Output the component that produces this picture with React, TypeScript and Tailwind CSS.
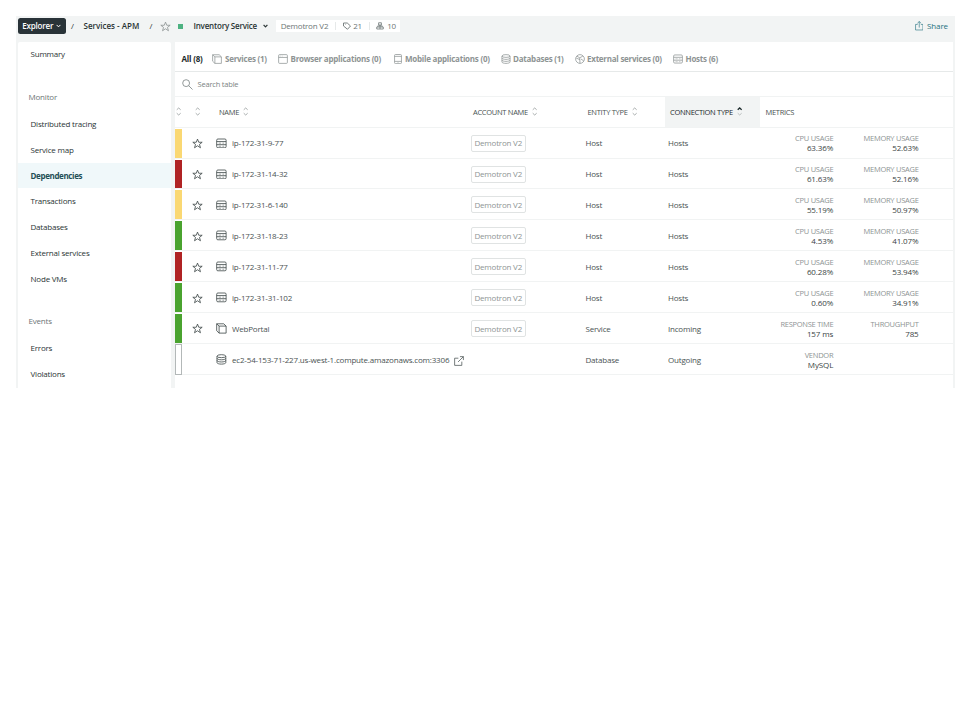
import React from "react";

type IconProps = { className?: string };
const stroke = { fill: "none", stroke: "currentColor", strokeWidth: 1.2, strokeLinejoin: "round" as const };

const Star = ({ className = "" }: IconProps) => (
  <svg viewBox="0 0 16 16" className={className} {...stroke}>
    <path strokeLinejoin="miter" strokeWidth="1.2" d="M8 1.6 9.8 6.2H14.8L10.9 9.3 12.3 14.2 8 11.3 3.7 14.2 5.1 9.3 1.2 6.2H6.2Z" />
  </svg>
);
const HostIcon = ({ className = "" }: IconProps) => (
  <svg viewBox="0 0 16 16" className={className} {...stroke}>
    <rect x="1" y="1.5" width="14" height="13" rx="1.8" />
    <path d="M1 5.3H15M1 9.9H15" />
    <path strokeOpacity=".6" d="M4 7.6H7.5M9.5 7.6H12M4 12.2H7.5M9.5 12.2H12" />
  </svg>
);
const ServiceIcon = ({ className = "" }: IconProps) => (
  <svg viewBox="0 0 16 16" className={className} {...stroke}>
    <path d="M4.6 4.6H15V15H4.6ZM4.6 4.6 1 1.2H11.5L15 4.6M1 1.2V11.5L4.6 15" />
  </svg>
);
const DbIcon = ({ className = "" }: IconProps) => (
  <svg viewBox="0 0 16 16" className={className} {...stroke}>
    <ellipse cx="8" cy="3.2" rx="6.5" ry="2.2" />
    <path d="M1.5 3.2V12.8C1.5 14 4.4 15 8 15S14.5 14 14.5 12.8V3.2M1.5 6.4C1.5 7.6 4.4 8.6 8 8.6S14.5 7.6 14.5 6.4M1.5 9.6C1.5 10.8 4.4 11.8 8 11.8S14.5 10.8 14.5 9.6" />
  </svg>
);
const BrowserIcon = ({ className = "" }: IconProps) => (
  <svg viewBox="0 0 16 16" className={className} {...stroke}>
    <rect x="1" y="1" width="14" height="14" rx="1.5" />
    <path d="M1 5.5H15" />
    <path strokeOpacity=".5" d="M3 3.3H4.5M6 3.3H7.5" />
  </svg>
);
const MobileIcon = ({ className = "" }: IconProps) => (
  <svg viewBox="0 0 16 16" className={className} {...stroke}>
    <rect x="2.5" y=".8" width="11" height="14.6" rx="1.5" />
    <path d="M2.5 3.8H13.5M2.5 11.8H13.5" />
    <path strokeOpacity=".5" d="M7 13.6H9" />
  </svg>
);
const GlobeIcon = ({ className = "" }: IconProps) => (
  <svg viewBox="0 0 16 16" className={className} {...stroke}>
    <circle cx="8" cy="8" r="7" />
    <path d="M3 3.5 7.5 6 8 15M7.5 6 12.5 3.5M2 6.5 7.8 9M9.5 8 14 11" />
  </svg>
);
const External = ({ className = "" }: IconProps) => (
  <svg viewBox="0 0 16 16" className={className} {...stroke}>
    <path d="M7 3.5H1V15H12.5V9M9.5 1H15V6.5M15 1 6.5 9.5" />
  </svg>
);
const Sort = ({ active = false }: { active?: boolean }) => (
  <svg viewBox="0 0 6 10" className="h-[9px] w-[5.4px] shrink-0" fill="none" strokeWidth={active ? 1.5 : 1}>
    <path d="M.8 3.1 3 1.1 5.2 3.1" stroke={active ? "#1d2b2c" : "#9ea4a4"} />
    <path d="M.8 6.9 3 8.9 5.2 6.9" strokeWidth="1" stroke={active ? "#b5baba" : "#9ea4a4"} />
  </svg>
);

const NavItem = ({ label, active = false }: { label: string; active?: boolean }) => (
  <div
    className={
      active
        ? "flex h-[25.8px] items-center bg-[#f0f8fa] pt-[0.6px] pl-[12.5px] font-bold tracking-[-0.36px] text-[#1f4f56]"
        : "flex h-[25.8px] items-center pl-[12.5px] text-[#2a3434]"
    }
  >
    {label}
  </div>
);
const NavHeading = ({ label }: { label: string }) => (
  <div className="flex h-[43.8px] items-center pt-[15px] pl-[10.5px] text-[#6d7676]">{label}</div>
);

const tabs = [
  { Icon: ServiceIcon, label: "Services (1)", width: "w-[65.5px]", gap: "gap-[3px]" },
  { Icon: BrowserIcon, label: "Browser applications (0)", width: "w-[115px]", gap: "gap-[3px]" },
  { Icon: MobileIcon, label: "Mobile applications (0)", width: "w-[108px]", gap: "gap-[2.5px]" },
  { Icon: DbIcon, label: "Databases (1)", width: "w-[74px]", gap: "gap-[2.5px]" },
  { Icon: GlobeIcon, label: "External services (0)", width: "w-[98.5px]", gap: "gap-[2.5px]" },
  { Icon: HostIcon, label: "Hosts (6)", width: "w-[60px]", gap: "gap-[2.5px]" },
];

type Row = { bar: string; name: string; kind: string; conn: string; m: string[][] };
const yellow = "bg-[#fad873]";
const red = "bg-[#b02324]";
const green = "bg-[#4aa32f]";
const usage = (c: string, m: string) => [["CPU USAGE", c], ["MEMORY USAGE", m]];
const rows: Row[] = [
  { bar: yellow, name: "ip-172-31-9-77", kind: "Host", conn: "Hosts", m: usage("63.36%", "52.63%") },
  { bar: red, name: "ip-172-31-14-32", kind: "Host", conn: "Hosts", m: usage("61.63%", "52.16%") },
  { bar: yellow, name: "ip-172-31-6-140", kind: "Host", conn: "Hosts", m: usage("55.19%", "50.97%") },
  { bar: green, name: "ip-172-31-18-23", kind: "Host", conn: "Hosts", m: usage("4.53%", "41.07%") },
  { bar: red, name: "ip-172-31-11-77", kind: "Host", conn: "Hosts", m: usage("60.28%", "53.94%") },
  { bar: green, name: "ip-172-31-31-102", kind: "Host", conn: "Hosts", m: usage("0.60%", "34.91%") },
  { bar: green, name: "WebPortal", kind: "Service", conn: "Incoming", m: [["RESPONSE TIME", "157 ms"], ["THROUGHPUT", "785"]] },
  {
    bar: "border border-[#b3b8b8] bg-white",
    name: "ec2-54-153-71-227.us-west-1.compute.amazonaws.com:3306",
    kind: "Database",
    conn: "Outgoing",
    m: [["VENDOR", "MySQL"]],
  },
];
const kindIcons: Record<string, (p: IconProps) => React.ReactNode> = { Host: HostIcon, Service: ServiceIcon, Database: DbIcon };

const TableRow = ({ row }: { row: Row }) => {
  const Icon = kindIcons[row.kind];
  const isDb = row.kind === "Database";
  return (
    <div className="flex h-[30.95px] items-center border-b border-[#f1f3f3] text-[#4a5353]">
      <div className={"w-[7px] shrink-0 self-stretch " + (isDb ? "-mb-px " : "mt-px ") + row.bar} />
      <div className="flex w-[34.5px] justify-center pt-[1.5px]">
        {!isDb && <Star className="mr-[3.5px] h-[11px] w-[11px] text-[#3f4949]" />}
      </div>
      <div className="flex w-[254.5px] items-center pt-[1px]">
        <Icon className="-ml-[0.3px] h-[10.8px] w-[10.8px] shrink-0 text-[#3f4949]" />
        <span className="ml-[5px] tracking-[-0.18px]">{row.name}</span>
        {isDb && <External className="mt-[2px] ml-[4.5px] h-[10px] w-[10px] shrink-0" />}
      </div>
      <div className="w-[114.5px] pt-[1px]">
        {!isDb && (
          <span className="flex h-[17px] w-[54.5px] items-center justify-center rounded-[2px] border border-[#e0e3e3] text-[#8e9494]">
            Demotron V2
          </span>
        )}
      </div>
      <div className="w-[82.5px] pt-[1px]">{row.kind}</div>
      <div className="w-[80px] pt-[1px]">{row.conn}</div>
      {row.m.map(([label, value]) => (
        <div key={label} className="w-[85.3px] pt-[1px] text-right leading-[9px]">
          <div className="text-[7.5px] tracking-[-0.26px] text-[#8e9494]">{label}</div>
          <div className="tracking-[-0.1px] text-[#3a4444]">{value}</div>
        </div>
      ))}
    </div>
  );
};

export default function App() {
  return (
    <div className="h-[720px] w-[960px] overflow-hidden bg-white pt-4 pl-4 font-['Open_Sans',sans-serif] text-[8px] leading-[10px] tracking-[-0.2px] whitespace-nowrap">
      <div className="flex h-[372px] w-[939px] flex-col bg-[#f2f4f4]">
        <header className="flex h-[26px] shrink-0 items-center pb-[6px] pl-[2px] text-[#2a3434]">
          <div className="flex h-[15.5px] w-[47.5px] items-center justify-center gap-[3px] rounded-[2.5px] bg-[#293338] font-semibold text-white">
            Explorer
            <svg viewBox="0 0 6 4" className="h-[4px] w-[5px]" {...stroke}><path d="M.7.7 3 3 5.3.7" /></svg>
          </div>
          <span className="w-[18px] pl-[5.5px]">/</span>
          <span className="w-[66px] font-semibold tracking-normal">Services - APM</span>
          <span className="w-[10.5px]">/</span>
          <Star className="h-[11px] w-[11px] text-[#8e9494]" />
          <span className="ml-[7px] h-[5px] w-[5px] bg-[#4db281]" />
          <span className="ml-[10.5px] w-[69px] font-semibold">Inventory Service</span>
          <svg viewBox="0 0 6 4" className="h-[4px] w-[5px]" {...stroke} strokeWidth={1.5}><path d="M.7.7 3 3 5.3.7" /></svg>
          <div className="ml-[8.2px] flex h-[12px] w-[124px] items-center bg-white pl-[5px] text-[#6d7676]">
            <span className="w-[54.5px]">Demotron V2</span>
            <span className="h-[8px] w-px bg-[#e6e9e9]" />
            <svg viewBox="0 0 16 16" className="ml-[6.5px] h-[8px] w-[8px]" {...stroke} strokeWidth={1.8}>
              <path d="M1 2H8.5L15 8 9 14.5 1 8ZM4.2 5H5" />
            </svg>
            <span className="ml-[2.5px] w-[15.5px]">21</span>
            <span className="h-[8px] w-px bg-[#e6e9e9]" />
            <svg viewBox="0 0 16 16" className="ml-[6.5px] h-[8px] w-[8px]" {...stroke} strokeWidth={1.6}>
              <path d="M5.2 1.5H10.8V6H5.2ZM3.5 9.5V7.8H12.5V9.5M8 6V14M1.5 10H14.5V14H1.5Z" />
            </svg>
            <span className="ml-[3px]">10</span>
          </div>
          <div className="mr-[7px] ml-auto flex items-center gap-[3.5px] tracking-[-0.1px] text-[#257281]">
            <svg viewBox="0 0 16 18" className="h-[9.5px] w-[8.5px]" {...stroke}>
              <path d="M5 6.5H1V17H15V6.5H11M8 12.5V1M4.5 4.3 8 1 11.5 4.3" />
            </svg>
            Share
          </div>
        </header>
        <div className="flex min-h-0 flex-1 pl-[2px]">
          <nav className="w-[152.5px] shrink-0 overflow-hidden rounded-t-[2px] bg-white">
            <div className="-mt-[0.6px]">
              <NavItem label="Summary" />
              <NavHeading label="Monitor" />
              {["Distributed tracing", "Service map", "Dependencies", "Transactions", "Databases", "External services", "Node VMs"].map((l) => (
                <NavItem key={l} label={l} active={l === "Dependencies"} />
              ))}
              <NavHeading label="Events" />
              <NavItem label="Errors" />
              <NavItem label="Violations" />
            </div>
          </nav>
          <main className="ml-[4.5px] w-[778px] shrink-0 bg-white">
            <div className="flex h-[30px] items-center border-b border-[#e6e9e9] pt-[4px] pl-[6.5px] font-bold tracking-[-0.24px] text-[#8e9494]">
              <span className="w-[30.5px] tracking-[-0.2px] text-[#1d2b2c]">All (8)</span>
              {tabs.map(({ Icon, label, width, gap }) => (
                <span key={label} className={"flex items-center " + width + " " + gap}>
                  <Icon className="h-[10px] w-[10px] shrink-0" />
                  {label}
                </span>
              ))}
            </div>
            <div className="flex h-[25px] items-center border-b border-[#f1f3f3] pl-[6.5px] text-[7.5px] text-[#7b8383]">
              <svg viewBox="0 0 16 16" className="mr-[5px] h-[11px] w-[11px]" {...stroke}>
                <circle cx="6" cy="6" r="5" />
                <path d="M9.7 9.7 15.3 15.3" />
              </svg>
              Search table
            </div>
            <div className="flex h-[30.6px] items-center border-b border-[#f1f3f3] text-[7.5px] tracking-[-0.3px] text-[#4a5353]">
              <div className="w-[19.5px] pl-[1px]"><Sort /></div>
              <div className="w-[24.5px]"><Sort /></div>
              <div className="flex w-[254px] items-center gap-[4px]">NAME <Sort /></div>
              <div className="flex w-[114.5px] items-center gap-[4px]">ACCOUNT NAME <Sort /></div>
              <div className="flex w-[77.5px] items-center gap-[4px]">ENTITY TYPE <Sort /></div>
              <div className="flex w-[95px] items-center gap-[4px] self-stretch bg-[#f2f4f4] pl-[5px] text-[#1d2b2c]">
                CONNECTION TYPE <Sort active />
              </div>
              <div className="pl-[5.5px]">METRICS</div>
            </div>
            {rows.map((row) => <TableRow key={row.name} row={row} />)}
          </main>
        </div>
      </div>
    </div>
  );
}
